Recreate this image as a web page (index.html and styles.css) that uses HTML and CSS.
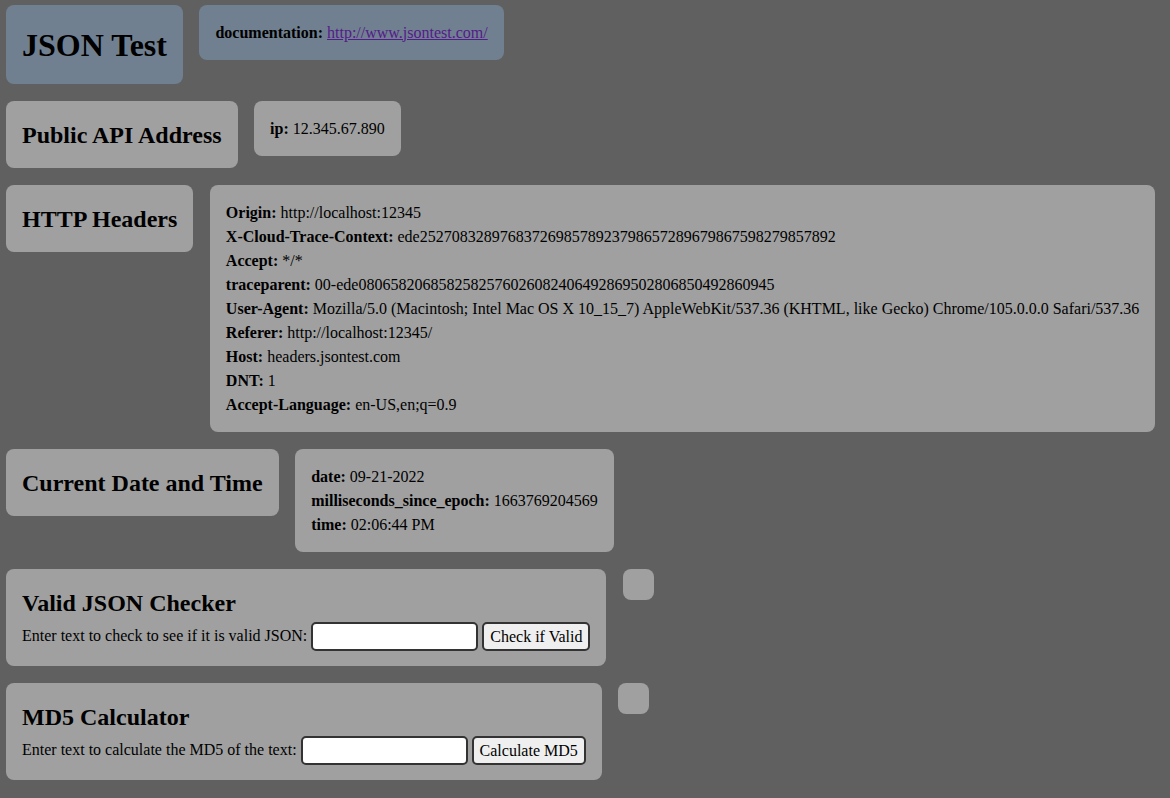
FILE: index.html
```html
<!DOCTYPE html>
<html>
<head>
<meta charset="utf-8">
<title>JSON Test</title>
<link rel="stylesheet" href="styles.css">
</head>
<body>
<div class="page">
  <div class="row">
    <div class="box title-box"><h1>JSON Test</h1></div>
    <div class="box title-box"><div class="line"><b>documentation:</b> <a href="#" class="link">http://www.jsontest.com/</a></div></div>
  </div>
  <div class="row">
    <div class="box"><h2>Public API Address</h2></div>
    <div class="box"><div class="line"><b>ip:</b> 12.345.67.890</div></div>
  </div>
  <div class="row">
    <div class="box"><h2>HTTP Headers</h2></div>
    <div class="box">
      <div class="line"><b>Origin:</b> http://localhost:12345</div>
      <div class="line"><b>X-Cloud-Trace-Context:</b> ede2527083289768372698578923798657289679867598279857892</div>
      <div class="line"><b>Accept:</b> */*</div>
      <div class="line"><b>traceparent:</b> 00-ede0806582068582582576026082406492869502806850492860945</div>
      <div class="line"><b>User-Agent:</b> Mozilla/5.0 (Macintosh; Intel Mac OS X 10_15_7) AppleWebKit/537.36 (KHTML, like Gecko) Chrome/105.0.0.0 Safari/537.36</div>
      <div class="line"><b>Referer:</b> http://localhost:12345/</div>
      <div class="line"><b>Host:</b> headers.jsontest.com</div>
      <div class="line"><b>DNT:</b> 1</div>
      <div class="line"><b>Accept-Language:</b> en-US,en;q=0.9</div>
    </div>
  </div>
  <div class="row">
    <div class="box"><h2>Current Date and Time</h2></div>
    <div class="box">
      <div class="line"><b>date:</b> 09-21-2022</div>
      <div class="line"><b>milliseconds_since_epoch:</b> 1663769204569</div>
      <div class="line"><b>time:</b> 02:06:44 PM</div>
    </div>
  </div>
  <div class="row">
    <div class="box">
      <h2>Valid JSON Checker</h2>
      <div class="form-line">Enter text to check to see if it is valid JSON: <input class="text-input" type="text"> <button class="btn">Check if Valid</button></div>
    </div>
    <div class="box empty"></div>
  </div>
  <div class="row">
    <div class="box">
      <h2>MD5 Calculator</h2>
      <div class="form-line">Enter text to calculate the MD5 of the text: <input class="text-input" type="text"> <button class="btn">Calculate MD5</button></div>
    </div>
    <div class="box empty"></div>
  </div>
</div>
</body>
</html>
```
FILE: styles.css
```css
html, body {
  margin: 0;
  padding: 0;
  background: #606060;
}
body {
  font-family: "Liberation Serif", "Times New Roman", serif;
  font-size: 16px;
  line-height: 1.5;
  color: #000;
}
.page {
  display: flex;
  flex-direction: column;
  gap: 17px;
  padding: 5px 6px;
}
.row {
  display: flex;
  align-items: flex-start;
  gap: 16.5px;
}
.box {
  background: #a0a0a0;
  border-radius: 8px;
  padding: 15.5px 16px;
  flex: 0 0 auto;
}
.title-box {
  background: #708090;
}
.empty {
  width: 0;
  height: 0;
  padding: 15.5px;
}
h1 {
  margin: 0;
  font-size: 32px;
  line-height: 48px;
}
h2 {
  margin: 0;
  font-size: 24px;
  line-height: 36px;
}
.line {
  line-height: 24px;
  white-space: nowrap;
}
.link {
  color: #551a8b;
}
.form-line {
  height: 30px;
  line-height: 30px;
  white-space: nowrap;
}
.text-input {
  box-sizing: border-box;
  width: 167px;
  height: 29px;
  border: 2px solid #333;
  border-radius: 5px;
  background: #fff;
  font-family: inherit;
  font-size: 16px;
  vertical-align: middle;
  padding: 0 4px;
  margin: 0;
}
.btn {
  box-sizing: border-box;
  height: 29px;
  border: 2px solid #333;
  border-radius: 5px;
  background: #efefef;
  font-family: inherit;
  font-size: 16px;
  color: #000;
  padding: 0 6px;
  vertical-align: middle;
  margin: 0;
}
```
